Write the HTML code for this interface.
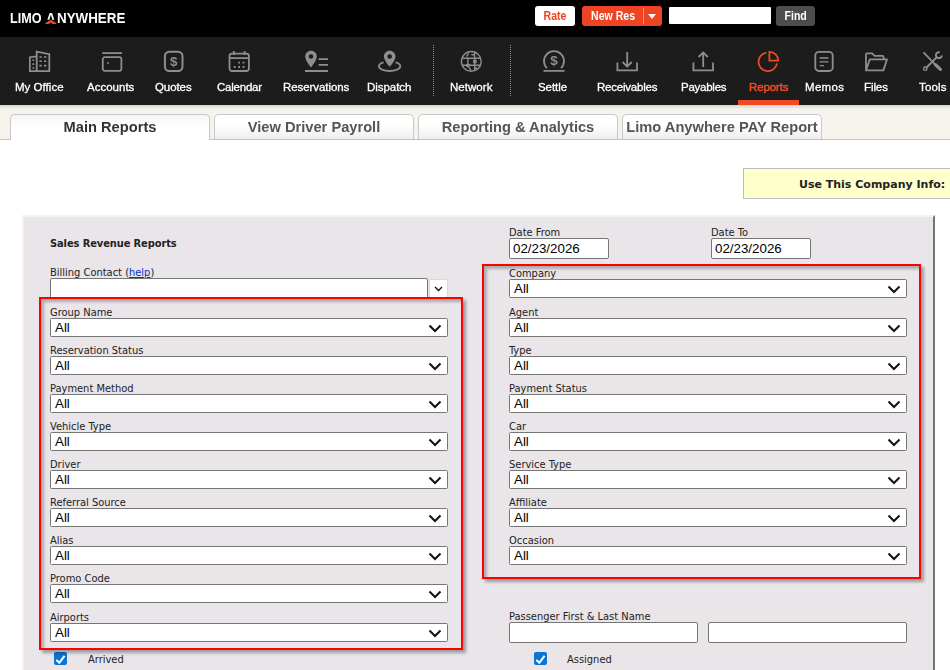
<!DOCTYPE html>
<html><head><meta charset="utf-8"><title>Limo Anywhere - Reports</title>
<style>
html,body{margin:0;padding:0}
body{width:950px;height:670px;overflow:hidden;background:#fff;position:relative;font-family:"Liberation Sans",sans-serif}
.abs{position:absolute}
#top{position:absolute;left:0;top:0;width:950px;height:37px;background:#000}
#nav{position:absolute;left:0;top:37px;width:950px;height:68px;background:#1c1c1c}
#logo{position:absolute;left:0;top:0;color:#fff;font:bold 14px/18px "Liberation Sans",sans-serif;white-space:nowrap}
.lg{position:absolute;top:9.2px;transform-origin:0 0}
.btn{position:absolute;top:6px;height:20px;border-radius:3px;font:bold 12px/20px "Liberation Sans",sans-serif;text-align:center;white-space:nowrap}
.sx{display:inline-block;transform:scaleX(.88)}
.ni{position:absolute;top:0;height:68px;color:#fff;font:11.5px/14px "Liberation Sans",sans-serif;white-space:nowrap}
.ni span{position:absolute;top:43px;left:0;width:100%;text-align:center}
.ni svg{position:absolute;top:13px}
.nt{position:absolute;top:43px;color:#fff;-webkit-text-stroke:0.3px currentColor;font:11.5px/14px "Liberation Sans",sans-serif;white-space:nowrap}
.nt,.nic,#logo,.btn,.tab{will-change:transform}
.nic{position:absolute;top:13px;width:24px;height:22px}
.nic svg{display:block}
.sep{position:absolute;top:8px;height:51px;width:0;border-left:1px dotted #8a8a8a}
#tabs{position:absolute;left:0;top:105px;width:950px;height:34px;background:#f6f3ed;border-bottom:1px solid #c2c2c2;background-image:linear-gradient(#d6d3cd 0,#f6f3ed 4px)}
.tab{position:absolute;top:9px;height:25px;box-sizing:border-box;border:1px solid #c8c8c8;border-bottom:none;border-radius:5px 5px 0 0;background:linear-gradient(#ffffff 40%,#eeeeee);color:#555;font:bold 14.67px/24px "Liberation Sans",sans-serif;text-align:center;white-space:nowrap}
.tab.act{height:26px;background:linear-gradient(#f4f6f6,#ffffff 60%);color:#333}
#yel{position:absolute;left:743px;top:168px;width:220px;height:29px;background:#ffffcc;border:1px solid #bdbdbd;font:bold 11px/31px "DejaVu Sans",sans-serif;color:#222;white-space:nowrap}
#panel{position:absolute;left:22px;top:215px;width:909px;height:470px;background:#e9e5e9;border-top:2px solid #f2f2f2;border-left:2px solid #f2f2f2;border-right:2px solid #747474}
.lb{position:absolute;font:11px/13px "DejaVu Sans Condensed","DejaVu Sans",sans-serif;font-stretch:condensed;color:#222;white-space:nowrap}
.sel{position:absolute;width:398px;height:19px;box-sizing:border-box;border:1px solid #767676;border-radius:1.5px;background:#fff;font:13.33px/17px "Liberation Sans",sans-serif;color:#000;padding-left:4px}
.sel svg{position:absolute;right:5px;top:4.5px}
.inp{position:absolute;box-sizing:border-box;border:1px solid #767676;border-radius:2px;background:#fff;font:13.33px/19px "Liberation Sans",sans-serif;color:#000;padding-left:3px}
.red{position:absolute;box-sizing:border-box;border:2px solid #f00;box-shadow:3px 3px 3px rgba(0,0,0,.32),inset 3px 3px 3px rgba(0,0,0,.26)}
.cb{position:absolute;width:13px;height:13px;border-radius:2px;background:#0b74d3}
</style></head><body>
<div id="top">
<div id="logo"><span class="lg" style="left:10.2px;transform:scaleX(.9)">LIMO </span><span class="lg" style="left:45.9px;transform:scaleX(.96)">A</span><svg class="abs" style="left:44px;top:12px" width="14" height="11.6" viewBox="0 0 14 11.6"><polygon points="6.8,4.4 4.1,11.6 9.5,11.6" fill="#000"/><rect x="0" y="7.7" width="14" height="4" fill="#000"/><polyline points="1.9,12.3 6.8,9.2 11.7,12.3" fill="none" stroke="#ef4a23" stroke-width="2.6"/></svg><span class="lg" style="left:56.7px;transform:scaleX(.955)">NYWHERE</span></div>
<div class="btn" style="left:535px;width:40px;background:#fff;color:#ee4423"><b class="sx">Rate</b></div>
<div class="btn" style="left:582px;width:80px;background:#ee4423;color:#fff;text-align:left"><b class="sx" style="position:absolute;left:9px;transform-origin:0 50%">New Res</b><i style="position:absolute;left:61px;top:2px;height:16px;border-left:1px solid #f7917b"></i><i style="position:absolute;left:65.5px;top:8px;border:4.5px solid transparent;border-top:5px solid #fff;border-bottom:none"></i></div>
<div class="abs" style="left:669px;top:6.5px;width:102px;height:17px;background:#fff;border-radius:1px"></div>
<div class="btn" style="left:776px;width:39px;background:#4d4d4d;color:#fff"><b class="sx">Find</b></div>
</div>
<div id="nav">
<!--N-->
<div class="nt" style="left:14.7px;letter-spacing:0.03px">My Office</div>
<div class="nic" style="left:29px"><svg width="24" height="22" viewBox="0 0 24 22" fill="none" stroke="#8e8e8e" stroke-width="1.8"><path d="M7.7 21.2V1.6L20.3 4.2V21.2M0.8 21.2V7.2L7.7 6.4M0 21.2H21"/><path stroke-width="2.4" stroke-dasharray="1.6 2.7" d="M11.6 6.2V19M16.2 6.2V19" /><path stroke-width="1.8" stroke-dasharray="1.6 2.3" d="M4.3 9.4V19"/></svg></div>
<div class="nt" style="left:87.4px;letter-spacing:0.01px">Accounts</div>
<div class="nic" style="left:101px"><svg width="24" height="22" viewBox="0 0 24 22" fill="none" stroke="#8e8e8e" stroke-width="1.8"><path d="M1.2 3.1H21"/><rect x="1.8" y="7.2" width="18.6" height="13.6" rx="2"/><rect x="6.2" y="12" width="1.4" height="2" fill="#8e8e8e" stroke="none"/></svg></div>
<div class="nt" style="left:154.7px;letter-spacing:-0.08px">Quotes</div>
<div class="nic" style="left:163px"><svg width="24" height="22" viewBox="0 0 24 22" fill="none" stroke="#8e8e8e" stroke-width="1.8"><rect x="1.9" y="1.7" width="17.6" height="19.4" rx="4.5" stroke-width="2"/><text x="10.8" y="16" style="font:bold 13.5px Liberation Sans,sans-serif" text-anchor="middle" fill="#8e8e8e" stroke="none">$</text></svg></div>
<div class="nt" style="left:216.6px;letter-spacing:-0.22px">Calendar</div>
<div class="nic" style="left:227.8px"><svg width="24" height="22" viewBox="0 0 24 22" fill="none" stroke="#8e8e8e" stroke-width="1.8"><rect x="1.5" y="3.6" width="19.4" height="17.4" rx="2.5"/><path d="M1.5 8.2H21M5.8 1V5M16.6 1V5"/><path stroke-width="1.8" stroke-dasharray="1.8 2.6" d="M10.2 12.6H19M5.8 17H19"/></svg></div>
<div class="nt" style="left:282.7px;letter-spacing:-0.07px">Reservations</div>
<div class="nic" style="left:305px"><svg width="24" height="22" viewBox="0 0 24 22" fill="none" stroke="#8e8e8e" stroke-width="1.8"><path fill="#8e8e8e" stroke="none" fill-rule="evenodd" d="M6 0.8C2.7 0.8 0.2 3.3 0.2 6.4C0.2 10.4 6 17.4 6 17.4C6 17.4 11.8 10.4 11.8 6.4C11.8 3.3 9.3 0.8 6 0.8ZM6 4.2A2.3 2.3 0 1 1 6 8.8A2.3 2.3 0 1 1 6 4.2Z"/><path d="M13.6 9.2H23M13.6 14.9H23M0 21H23"/></svg></div>
<div class="nt" style="left:366.6px;letter-spacing:-0.04px">Dispatch</div>
<div class="nic" style="left:378px"><svg width="24" height="22" viewBox="0 0 24 22" fill="none" stroke="#8e8e8e" stroke-width="1.8"><path fill="#8e8e8e" stroke="none" fill-rule="evenodd" d="M11.7 0.8C8.4 0.8 5.9 3.3 5.9 6.4C5.9 10.4 11.7 16.8 11.7 16.8C11.7 16.8 17.5 10.4 17.5 6.4C17.5 3.3 15 0.8 11.7 0.8ZM11.7 4.2A2.3 2.3 0 1 1 11.7 8.8A2.3 2.3 0 1 1 11.7 4.2Z"/><path d="M5.6 12.4C2.6 13.2 0.9 14.6 0.9 16.2C0.9 18.9 5.7 21 11.6 21C17.5 21 22.3 18.9 22.3 16.2C22.3 14.6 20.6 13.2 17.6 12.4"/></svg></div>
<div class="nt" style="left:450.0px;letter-spacing:0.04px">Network</div>
<div class="nic" style="left:460.2px"><svg width="24" height="22" viewBox="0 0 24 22" fill="none" stroke="#8e8e8e" stroke-width="1.8"><g stroke-width="1.4"><circle cx="11.3" cy="11.4" r="9.9"/><path d="M2 8.3H20.6M2 15.2H20.6M14.6 1.8V21M7.9 8.3V14M8.6 3.4L6.6 6.6M9 17L11 20.6M11.4 4.8H14.4M14.6 18.2H17.2"/><circle cx="7.9" cy="15.6" r="1.3"/><circle cx="14.9" cy="11.6" r="1.4"/></g></svg></div>
<div class="nt" style="left:538.0px;letter-spacing:-0.07px">Settle</div>
<div class="nic" style="left:542.5px"><svg width="24" height="22" viewBox="0 0 24 22" fill="none" stroke="#8e8e8e" stroke-width="1.8"><path d="M4 18.2A10 10 0 1 1 18 18.2M0.5 20.8H21.5"/><text x="11" y="15.4" style="font:bold 13.5px Liberation Sans,sans-serif" text-anchor="middle" fill="#8e8e8e" stroke="none">$</text></svg></div>
<div class="nt" style="left:596.8px;letter-spacing:-0.22px">Receivables</div>
<div class="nic" style="left:616.1px"><svg width="24" height="22" viewBox="0 0 24 22" fill="none" stroke="#8e8e8e" stroke-width="1.8"><path d="M1.4 12.4V20.4H21V12.4M11.2 2V16.4M6.6 12L11.2 16.6L15.8 12"/></svg></div>
<div class="nt" style="left:680.7px;letter-spacing:-0.25px">Payables</div>
<div class="nic" style="left:691.9px"><svg width="24" height="22" viewBox="0 0 24 22" fill="none" stroke="#8e8e8e" stroke-width="1.8"><path d="M1.4 12.4V20.4H21V12.4M11.2 2.4V17M6.6 7L11.2 2.4L15.8 7"/></svg></div>
<div class="nt" style="left:748.5px;letter-spacing:-0.11px;color:#ef4a23;-webkit-text-stroke-width:.5px">Reports</div>
<div class="nic" style="left:756.9px"><svg width="24" height="22" viewBox="0 0 24 22" fill="none" stroke="#ef4a23" stroke-width="1.8"><path d="M9.4 2.6A9.3 9.3 0 1 0 20 13.4"/><path d="M12.4 1.8V10.6H21.2A8.8 8.8 0 0 0 12.4 1.8Z"/></svg></div>
<div class="nt" style="left:804.8px;letter-spacing:0.30px">Memos</div>
<div class="nic" style="left:813.3px"><svg width="24" height="22" viewBox="0 0 24 22" fill="none" stroke="#8e8e8e" stroke-width="1.8"><rect x="2.3" y="1.8" width="17.4" height="19.2" rx="3.5"/><path stroke-width="1.3" d="M6.6 8H15.4M6.6 11.8H15.4M6.6 15.6H11"/></svg></div>
<div class="nt" style="left:863.6px;letter-spacing:-0.10px">Files</div>
<div class="nic" style="left:865px"><svg width="24" height="22" viewBox="0 0 24 22" fill="none" stroke="#8e8e8e" stroke-width="1.8"><path d="M1 20.4V4.6C1 3.9 1.5 3.4 2.2 3.4H7.2L9.6 5.8H17.4C18.1 5.8 18.6 6.3 18.6 7V9.2M1 20.4L4.8 9.4H22L18.4 20.4Z" stroke-linejoin="round"/></svg></div>
<div class="nt" style="left:918.7px;letter-spacing:0.19px">Tools</div>
<div class="nic" style="left:920.8px"><svg width="24" height="22" viewBox="0 0 24 22" fill="none" stroke="#8e8e8e" stroke-width="1.8"><path d="M2.5 2.3L13.6 13.9" stroke-width="1.8"/><path d="M14.4 14.6L19.4 19.4" stroke-width="3.2" stroke-linecap="round"/><path d="M5.5 17.5L16.3 6.7" stroke-width="1.9"/><circle cx="4.3" cy="18.7" r="1.7" stroke-width="1.4"/><path d="M18.8 2.3A3 3 0 1 0 20.9 5.4" stroke-width="1.9"/></svg></div>
<div class="sep" style="left:433px"></div><div class="sep" style="left:510px"></div>
<div class="abs" style="left:738px;top:63px;width:61px;height:5px;background:#ef4a23"></div>
<!--/N-->
</div>
<div id="tabs">
<div class="tab act" style="left:10px;width:200px">Main Reports</div>
<div class="tab" style="left:214px;width:200px">View Driver Payroll</div>
<div class="tab" style="left:418px;width:200px">Reporting &amp; Analytics</div>
<div class="tab" style="left:622px;width:200px">Limo Anywhere PAY Report</div>
</div>
<div id="yel"><span style="position:absolute;left:55px">Use This Company Info:</span></div>
<div id="panel"></div>
<!--P-->
<div class="lb" style="left:50px;top:237px;font-weight:bold;letter-spacing:-0.1px">Sales Revenue Reports</div>
<div class="lb" style="left:50px;top:266px">Billing Contact (<u style="color:#0033cc">help</u>)</div>
<div class="inp" style="left:50px;top:278px;width:378px;height:21px"></div>
<div class="abs" style="left:429px;top:279px;width:19px;height:19px;box-sizing:border-box;background:#fff;border:1px solid #d8d8d8;border-radius:2px"><svg class="abs" style="left:4px;top:6px" width="10" height="6" viewBox="0 0 10 6"><polyline points="1,1 4.5,4.5 8,1" fill="none" stroke="#111" stroke-width="1.3"/></svg></div>
<div class="lb" style="left:50px;top:306px">Group Name</div>
<div class="sel" style="left:50px;top:318px">All<svg width="14" height="9" viewBox="0 0 14 9"><polyline points="1.5,1.5 7,7 12.5,1.5" fill="none" stroke="#111" stroke-width="2" stroke-linejoin="miter"/></svg></div>
<div class="lb" style="left:50px;top:344px">Reservation Status</div>
<div class="sel" style="left:50px;top:356px">All<svg width="14" height="9" viewBox="0 0 14 9"><polyline points="1.5,1.5 7,7 12.5,1.5" fill="none" stroke="#111" stroke-width="2" stroke-linejoin="miter"/></svg></div>
<div class="lb" style="left:50px;top:382px">Payment Method</div>
<div class="sel" style="left:50px;top:394px">All<svg width="14" height="9" viewBox="0 0 14 9"><polyline points="1.5,1.5 7,7 12.5,1.5" fill="none" stroke="#111" stroke-width="2" stroke-linejoin="miter"/></svg></div>
<div class="lb" style="left:50px;top:420px">Vehicle Type</div>
<div class="sel" style="left:50px;top:432px">All<svg width="14" height="9" viewBox="0 0 14 9"><polyline points="1.5,1.5 7,7 12.5,1.5" fill="none" stroke="#111" stroke-width="2" stroke-linejoin="miter"/></svg></div>
<div class="lb" style="left:50px;top:458px">Driver</div>
<div class="sel" style="left:50px;top:470px">All<svg width="14" height="9" viewBox="0 0 14 9"><polyline points="1.5,1.5 7,7 12.5,1.5" fill="none" stroke="#111" stroke-width="2" stroke-linejoin="miter"/></svg></div>
<div class="lb" style="left:50px;top:496px">Referral Source</div>
<div class="sel" style="left:50px;top:508px">All<svg width="14" height="9" viewBox="0 0 14 9"><polyline points="1.5,1.5 7,7 12.5,1.5" fill="none" stroke="#111" stroke-width="2" stroke-linejoin="miter"/></svg></div>
<div class="lb" style="left:50px;top:534px">Alias</div>
<div class="sel" style="left:50px;top:546px">All<svg width="14" height="9" viewBox="0 0 14 9"><polyline points="1.5,1.5 7,7 12.5,1.5" fill="none" stroke="#111" stroke-width="2" stroke-linejoin="miter"/></svg></div>
<div class="lb" style="left:50px;top:572px">Promo Code</div>
<div class="sel" style="left:50px;top:584px">All<svg width="14" height="9" viewBox="0 0 14 9"><polyline points="1.5,1.5 7,7 12.5,1.5" fill="none" stroke="#111" stroke-width="2" stroke-linejoin="miter"/></svg></div>
<div class="lb" style="left:50px;top:611px">Airports</div>
<div class="sel" style="left:50px;top:623px">All<svg width="14" height="9" viewBox="0 0 14 9"><polyline points="1.5,1.5 7,7 12.5,1.5" fill="none" stroke="#111" stroke-width="2" stroke-linejoin="miter"/></svg></div>
<div class="lb" style="left:509px;top:267px">Company</div>
<div class="sel" style="left:509px;top:279px">All<svg width="14" height="9" viewBox="0 0 14 9"><polyline points="1.5,1.5 7,7 12.5,1.5" fill="none" stroke="#111" stroke-width="2" stroke-linejoin="miter"/></svg></div>
<div class="lb" style="left:509px;top:306px">Agent</div>
<div class="sel" style="left:509px;top:318px">All<svg width="14" height="9" viewBox="0 0 14 9"><polyline points="1.5,1.5 7,7 12.5,1.5" fill="none" stroke="#111" stroke-width="2" stroke-linejoin="miter"/></svg></div>
<div class="lb" style="left:509px;top:344px">Type</div>
<div class="sel" style="left:509px;top:356px">All<svg width="14" height="9" viewBox="0 0 14 9"><polyline points="1.5,1.5 7,7 12.5,1.5" fill="none" stroke="#111" stroke-width="2" stroke-linejoin="miter"/></svg></div>
<div class="lb" style="left:509px;top:382px">Payment Status</div>
<div class="sel" style="left:509px;top:394px">All<svg width="14" height="9" viewBox="0 0 14 9"><polyline points="1.5,1.5 7,7 12.5,1.5" fill="none" stroke="#111" stroke-width="2" stroke-linejoin="miter"/></svg></div>
<div class="lb" style="left:509px;top:420px">Car</div>
<div class="sel" style="left:509px;top:432px">All<svg width="14" height="9" viewBox="0 0 14 9"><polyline points="1.5,1.5 7,7 12.5,1.5" fill="none" stroke="#111" stroke-width="2" stroke-linejoin="miter"/></svg></div>
<div class="lb" style="left:509px;top:458px">Service Type</div>
<div class="sel" style="left:509px;top:470px">All<svg width="14" height="9" viewBox="0 0 14 9"><polyline points="1.5,1.5 7,7 12.5,1.5" fill="none" stroke="#111" stroke-width="2" stroke-linejoin="miter"/></svg></div>
<div class="lb" style="left:509px;top:496px">Affiliate</div>
<div class="sel" style="left:509px;top:508px">All<svg width="14" height="9" viewBox="0 0 14 9"><polyline points="1.5,1.5 7,7 12.5,1.5" fill="none" stroke="#111" stroke-width="2" stroke-linejoin="miter"/></svg></div>
<div class="lb" style="left:509px;top:534px">Occasion</div>
<div class="sel" style="left:509px;top:546px">All<svg width="14" height="9" viewBox="0 0 14 9"><polyline points="1.5,1.5 7,7 12.5,1.5" fill="none" stroke="#111" stroke-width="2" stroke-linejoin="miter"/></svg></div>
<div class="lb" style="left:509px;top:226px">Date From</div>
<div class="inp" style="left:509px;top:238px;width:100px;height:21px">02/23/2026</div>
<div class="lb" style="left:711px;top:226px">Date To</div>
<div class="inp" style="left:711px;top:238px;width:100px;height:21px">02/23/2026</div>
<div class="lb" style="left:509px;top:610px">Passenger First &amp; Last Name</div>
<div class="inp" style="left:509px;top:622px;width:189px;height:21px"></div>
<div class="inp" style="left:708px;top:622px;width:199px;height:21px"></div>
<div class="cb" style="left:54px;top:652px"><svg width="13" height="13" viewBox="0 0 13 13"><polyline points="2.3,6.9 5.3,9.8 10.6,2.8" fill="none" stroke="#fff" stroke-width="2"/></svg></div><div class="lb" style="left:88px;top:653px">Arrived</div>
<div class="cb" style="left:534px;top:652px"><svg width="13" height="13" viewBox="0 0 13 13"><polyline points="2.3,6.9 5.3,9.8 10.6,2.8" fill="none" stroke="#fff" stroke-width="2"/></svg></div><div class="lb" style="left:567px;top:653px">Assigned</div>
<div class="red" style="left:39px;top:297px;width:424px;height:353px"></div>
<div class="red" style="left:482px;top:264px;width:439px;height:315px"></div>
<!--/P-->
</body></html>
